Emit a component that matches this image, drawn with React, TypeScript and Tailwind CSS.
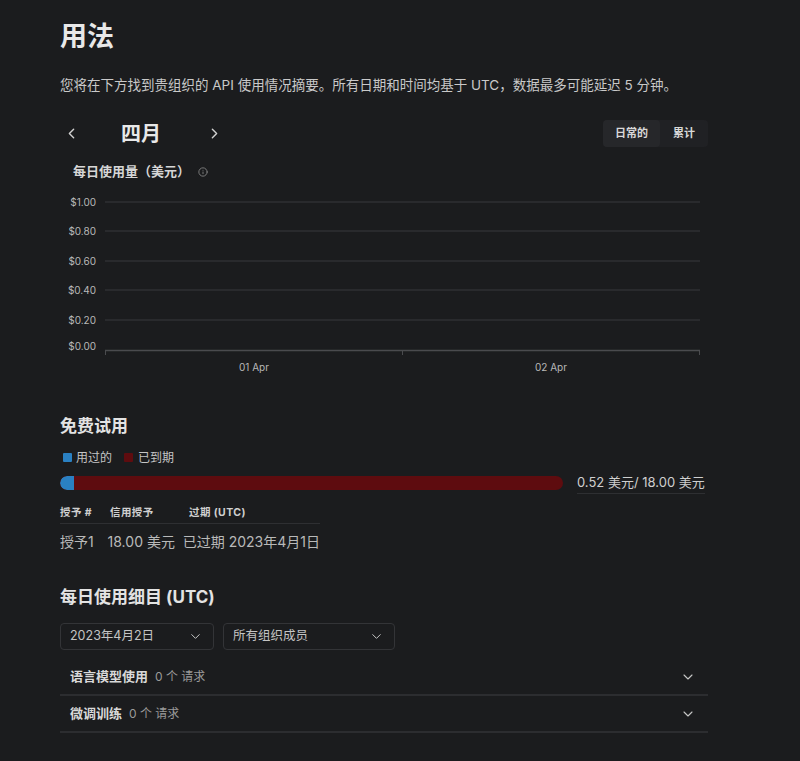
import { ChevronDown, ChevronLeft, ChevronRight, Info } from "lucide-react";

const font = { fontFamily: 'Inter, "Noto Sans CJK SC", sans-serif' };

function UsageChart() {
  const ticks = [
    { label: "$1.00", y: 14 },
    { label: "$0.80", y: 43 },
    { label: "$0.60", y: 73 },
    { label: "$0.40", y: 102 },
    { label: "$0.20", y: 132 },
  ];
  return (
    <svg width="648" height="192" viewBox="0 0 648 192" className="block">
      {ticks.map((t) => (
        <g key={t.label}>
          <line x1="45" x2="640" y1={t.y} y2={t.y} stroke="#38393c" strokeWidth="1" />
          <text x="36" y={t.y + 3.5} textAnchor="end" fontSize="10" fill="#b8b8b8" style={font}>
            {t.label}
          </text>
        </g>
      ))}
      <text x="36" y="162" textAnchor="end" fontSize="10" fill="#b8b8b8" style={font}>
        $0.00
      </text>
      <line x1="45" x2="640" y1="162.5" y2="162.5" stroke="#4a4b4e" strokeWidth="1.5" />
      <line x1="45.5" x2="45.5" y1="162" y2="167" stroke="#4a4b4e" />
      <line x1="342.5" x2="342.5" y1="162" y2="167" stroke="#4a4b4e" />
      <line x1="639.5" x2="639.5" y1="162" y2="167" stroke="#4a4b4e" />
      <text x="194" y="183" textAnchor="middle" fontSize="10" fill="#b8b8b8" style={font}>
        01 Apr
      </text>
      <text x="491" y="183" textAnchor="middle" fontSize="10" fill="#b8b8b8" style={font}>
        02 Apr
      </text>
    </svg>
  );
}

function Select({ value, width }: { value: string; width: string }) {
  return (
    <div
      className={`flex h-[27px] items-center justify-between rounded-[4px] border border-[#333437] pl-[9px] pr-[10px] text-[12.5px] text-[#c4c4c4] ${width}`}
    >
      <span>{value}</span>
      <ChevronDown className="h-[15px] w-[15px] text-[#c4c4c4]" strokeWidth={1.6} />
    </div>
  );
}

function BreakdownRow({ title, count }: { title: string; count: string }) {
  return (
    <div className="flex h-[37px] items-center justify-between border-b-2 border-[#2c2d30] pl-[10px] pr-[12px]">
      <div className="flex items-baseline gap-[7px]">
        <span className="text-[13px] font-bold text-[#d9d9d9]">{title}</span>
        <span className="text-[12px] text-[#9a9a9a]">{count}</span>
      </div>
      <ChevronDown className="h-[16px] w-[16px] text-[#c8c8c8]" strokeWidth={1.6} />
    </div>
  );
}

export default function App() {
  return (
    <div className="min-h-[761px] w-full bg-[#1b1c1e] text-[#e6e6e6]" style={font}>
      <div className="ml-[60px] w-[648px] pt-[18px]">
        <h1 className="text-[27px] font-bold leading-[38px] text-[#e8e8e8]">用法</h1>

        <p className="mt-[19px] text-[13.5px] leading-[20px] text-[#c9c9c9]">
          您将在下方找到贵组织的 API 使用情况摘要。所有日期和时间均基于 UTC，数据最多可能延迟 5 分钟。
        </p>

        {/* month nav + toggle */}
        <div className="mt-[25px] flex h-[27px] items-center justify-between">
          <div className="flex items-center">
            <ChevronLeft className="ml-[3px] h-[17px] w-[17px] text-[#d0d0d0]" strokeWidth={2} />
            <span className="ml-[41px] text-[20px] font-bold text-[#e8e8e8]">四月</span>
            <ChevronRight className="ml-[45px] h-[17px] w-[17px] text-[#d0d0d0]" strokeWidth={2} />
          </div>
          <div className="flex h-[27px] rounded-[4px] bg-[#202124] text-[11px] font-bold">
            <div className="flex w-[57px] items-center justify-center rounded-[4px] bg-[#26272a] text-[#d8d8d8]">
              日常的
            </div>
            <div className="flex w-[48px] items-center justify-center text-[#d8d8d8]">累计</div>
          </div>
        </div>

        <div className="mt-[15px] flex items-center pl-[13px]">
          <span className="text-[13px] font-bold text-[#d6d6d6]">每日使用量（美元）</span>
          <Info className="ml-[8px] h-[10px] w-[10px] text-[#8a8a8a]" strokeWidth={2} />
        </div>

        <div className="mt-[6px]">
          <UsageChart />
        </div>

        {/* free trial */}
        <h2 className="mt-[34px] text-[17px] font-bold leading-[24px] text-[#e3e3e3]">免费试用</h2>
        <div className="mt-[11px] flex items-center text-[12px] text-[#c4c4c4]">
          <span className="ml-[3px] h-[9px] w-[9px] rounded-[1px] bg-[#2a80c2]" />
          <span className="ml-[4px]">用过的</span>
          <span className="ml-[12px] h-[9px] w-[9px] rounded-[1px] bg-[#5e0c0f]" />
          <span className="ml-[5px]">已到期</span>
        </div>

        <div className="mt-[6px] flex items-center">
          <div className="flex h-[14px] w-[503px] overflow-hidden rounded-full bg-[#5e0c0f]">
            <div className="h-full w-[14px] rounded-l-full bg-[#2a80c2]" />
          </div>
          <span className="ml-[14px] whitespace-nowrap border-b border-[#2e2f32] pb-[1px] text-[13px] text-[#cfcfcf]">
            0.52 美元/ 18.00 美元
          </span>
        </div>

        {/* grants table */}
        <div className="mt-[8px] w-[260px]">
          <div className="flex h-[22px] items-center border-b border-[#2e2f32] text-[10.5px] font-bold tracking-[0.04em] text-[#cfcfcf]">
            <span className="w-[50px]">授予 #</span>
            <span className="w-[79px]">信用授予</span>
            <span>过期 (UTC)</span>
          </div>
          <div className="flex h-[35px] items-center text-[14px] text-[#b9b9b9]">
            <span className="w-[50px]">授予1</span>
            <span className="w-[79px]">18.00 美元</span>
            <span className="whitespace-nowrap">已过期 2023年4月1日</span>
          </div>
        </div>

        {/* daily breakdown */}
        <h2 className="mt-[26px] text-[17px] font-bold leading-[24px] text-[#e3e3e3]">每日使用细目 (UTC)</h2>
        <div className="mt-[14px] flex gap-[9px]">
          <Select value="2023年4月2日" width="w-[154px]" />
          <Select value="所有组织成员" width="w-[172px]" />
        </div>

        <div className="mt-[9px]">
          <BreakdownRow title="语言模型使用" count="0 个 请求" />
          <BreakdownRow title="微调训练" count="0 个 请求" />
        </div>
      </div>
    </div>
  );
}
